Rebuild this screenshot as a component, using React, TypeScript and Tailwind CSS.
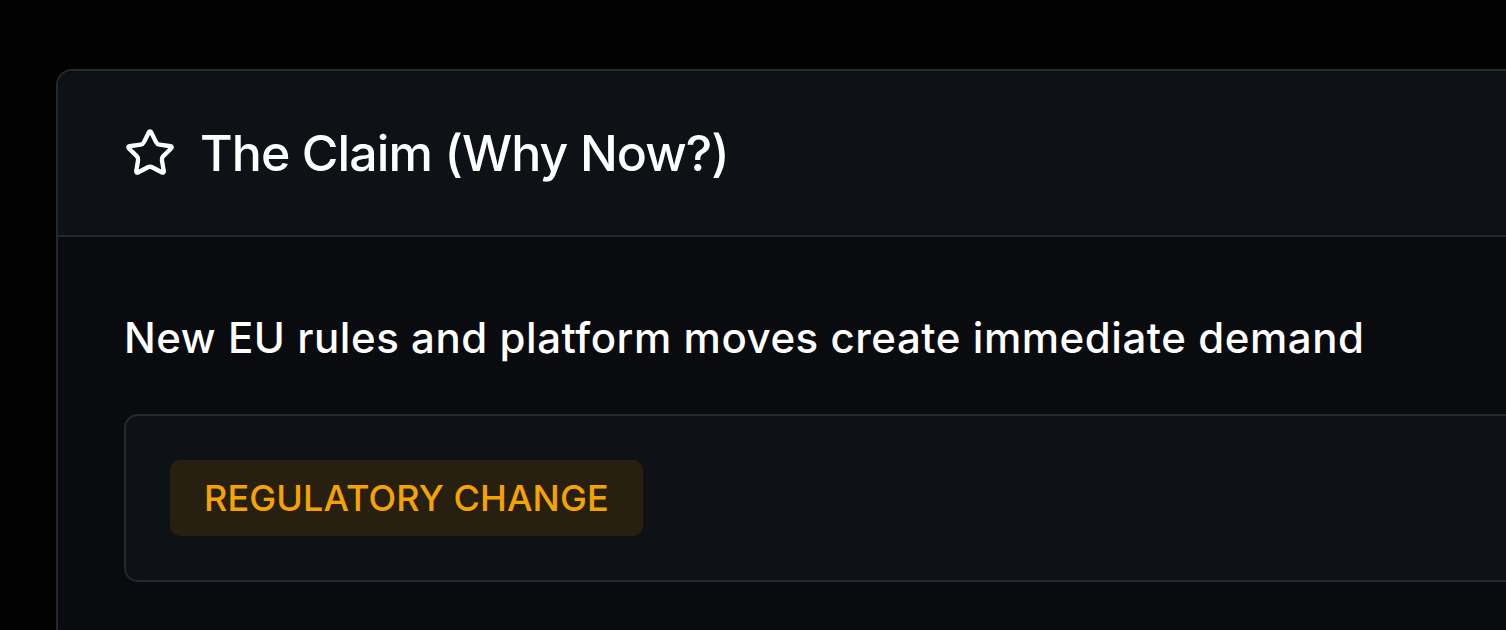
import React from 'react';
import { Star } from 'lucide-react';

const App: React.FC = () => {
  return (
    <div
      className="h-[630px] w-[1506px] overflow-hidden bg-[#020203] pl-[56px] pt-[69px]"
      style={{ fontFamily: 'Inter, "Noto Sans", sans-serif' }}
    >
      <div className="w-[1700px] rounded-[16px] border-2 border-[#25282e] bg-[#0a0b0f] overflow-hidden">
        {/* Header */}
        <div className="flex h-[166px] items-center gap-[24px] border-b-2 border-[#25282e] bg-[#0e1116] px-[66px]">
          <Star size={52} strokeWidth={2} className="text-white" />
          <h2 className="text-[50px] font-medium leading-none tracking-[-0.9px] text-white">
            The Claim (Why Now?)
          </h2>
        </div>

        {/* Body */}
        <div className="px-[66px] pt-[80px] pb-[60px]">
          <p className="text-[42px] font-medium leading-none tracking-[0.55px] text-white">
            New EU rules and platform moves create immediate demand
          </p>
          <div className="mt-[55px] rounded-[14px] border-2 border-[#25282e] bg-[#0e1116] p-[44px]">
            <span className="inline-flex h-[76px] items-center rounded-[10px] bg-[#272010] px-[34px] text-[36px] font-medium leading-none tracking-[0.1px] text-[#f5a300]">
              REGULATORY CHANGE
            </span>
          </div>
        </div>
      </div>
    </div>
  );
};

export default App;
